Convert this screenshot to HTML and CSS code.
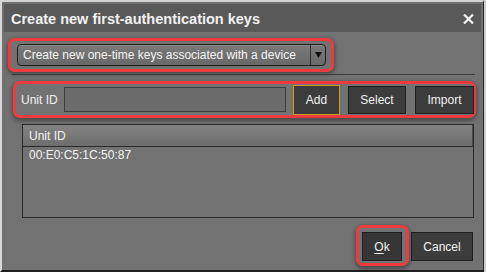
FILE: index.html
```html
<!DOCTYPE html>
<html>
<head>
<meta charset="utf-8">
<link rel="stylesheet" href="styles.css">
</head>
<body>
<div class="dialog">
  <div class="titlebar">
    <span class="title">Create new first-authentication keys</span>
    <svg class="close" width="11" height="10" viewBox="0 0 11 10"><path d="M1 0.5 L10 9.5 M10 0.5 L1 9.5" stroke="#f4f4f4" stroke-width="2.2" fill="none"/></svg>
  </div>
  <div class="mode ring">
    <div class="combo">
      <span class="combo-text">Create new one-time keys associated with a device</span>
      <span class="combo-arrow"><svg width="7" height="6" viewBox="0 0 7 6"><path d="M0 0 H7 L3.5 6 Z" fill="#111"/></svg></span>
    </div>
  </div>
  <div class="sep"></div>
  <div class="unit ring">
    <span class="label">Unit ID</span>
    <div class="input"></div>
    <div class="btn add">Add</div>
    <div class="btn sel">Select</div>
    <div class="btn imp">Import</div>
  </div>
  <div class="table">
    <div class="thead">Unit ID</div>
    <div class="trow">00:E0:C5:1C:50:87</div>
  </div>
  <div class="footer">
    <div class="okring ring">
      <div class="btn ok"><u>O</u>k</div>
    </div>
    <div class="btn cancel">Cancel</div>
  </div>
</div>
</body>
</html>
```

FILE: styles.css
```css
html, body {
  margin: 0;
  padding: 0;
}
body {
  background: #cfcfcf;
  font-family: "Liberation Sans", Arial, sans-serif;
  color: #f2f2f2;
  width: 486px;
  height: 272px;
  overflow: hidden;
}
.dialog {
  width: 484px;
  height: 272px;
  box-sizing: border-box;
  border-top: 2px solid #d2d2d2;
  border-left: 2px solid #d8d8d8;
  border-right: 1px solid #262626;
  border-bottom: 2px solid #1f1f1f;
  padding: 2px;
  background: #727272;
}
.titlebar {
  height: 28px;
  background: #595959;
  display: flex;
  align-items: center;
  justify-content: space-between;
  padding: 0 7px;
}
.title {
  font-weight: bold;
  font-size: 14.5px;
  color: #f2f2f2;
  padding-top: 1px;
}
.close {
  display: block;
  margin-top: 1px;
}
.ring {
  box-sizing: border-box;
  border: 3px solid #ec3a3e;
  border-radius: 7px;
  box-shadow: 0 2px 4px 1px rgba(0, 0, 0, 0.35);
}
.mode {
  margin: 6px 0 0 4px;
  width: 326px;
  height: 34px;
  padding: 3px 5px 3px 6px;
}
.combo {
  height: 22px;
  box-sizing: border-box;
  border: 1px solid #1e1e1e;
  border-radius: 4px;
  background: linear-gradient(#7a7a7a, #686868);
  display: flex;
  align-items: center;
  box-shadow: inset 0 1px 0 rgba(255,255,255,0.12);
}
.combo-text {
  flex: 1;
  font-size: 12px;
  padding-left: 5px;
  color: #f4f4f4;
  white-space: nowrap;
}
.combo-arrow {
  width: 14px;
  height: 20px;
  border-left: 1px solid #2e2e2e;
  display: flex;
  align-items: center;
  justify-content: center;
}
.combo-arrow svg {
  display: block;
}
.sep {
  margin: 2px 6px 0 8px;
  height: 1px;
  background: #3c3c3c;
}
.unit {
  margin: 6px 0 0 9px;
  width: 463px;
  height: 37px;
  display: flex;
  align-items: center;
  padding: 0 0 0 5px;
}
.label {
  width: 43px;
  font-size: 12px;
  color: #f2f2f2;
  flex: none;
}
.input {
  width: 222px;
  height: 25px;
  box-sizing: border-box;
  border: 1px solid #3e3e3e;
  background: #6c6c6c;
  flex: none;
}
.btn {
  box-sizing: border-box;
  background: #3c3c3c;
  border: 1px solid #1f1f1f;
  color: #f2f2f2;
  font-size: 12px;
  display: flex;
  align-items: center;
  justify-content: center;
  flex: none;
}
.add {
  margin-left: 7px;
  width: 47px;
  height: 30px;
  border-color: #c99c1c;
}
.sel {
  margin-left: 8px;
  width: 58px;
  height: 28px;
}
.imp {
  margin-left: 9px;
  width: 59px;
  height: 28px;
}
.table {
  margin: 6px 0 0 18px;
  width: 452px;
  height: 94px;
  box-sizing: border-box;
  border: 1px solid #2a2a2a;
}
.thead {
  height: 22px;
  box-sizing: border-box;
  border-bottom: 1px solid #2a2a2a;
  border-right: 1px solid #4a4a4a;
  background: linear-gradient(#838383, #6d6d6d);
  font-size: 12px;
  padding-left: 6px;
  display: flex;
  align-items: center;
}
.trow {
  height: 16px;
  font-size: 12px;
  padding-left: 6px;
  display: flex;
  align-items: center;
}
.footer {
  display: flex;
  justify-content: flex-end;
  align-items: flex-start;
  margin: 7px 8px 0 0;
}
.okring {
  width: 53px;
  height: 41px;
  padding: 4px 4px 0 3px;
}
.ok {
  width: 40px;
  height: 29px;
  background: #363636;
}
.ok u {
  text-decoration-thickness: 1px;
  text-underline-offset: 2px;
}
.cancel {
  margin: 7px 0 0 2px;
  width: 62px;
  height: 29px;
}
```
